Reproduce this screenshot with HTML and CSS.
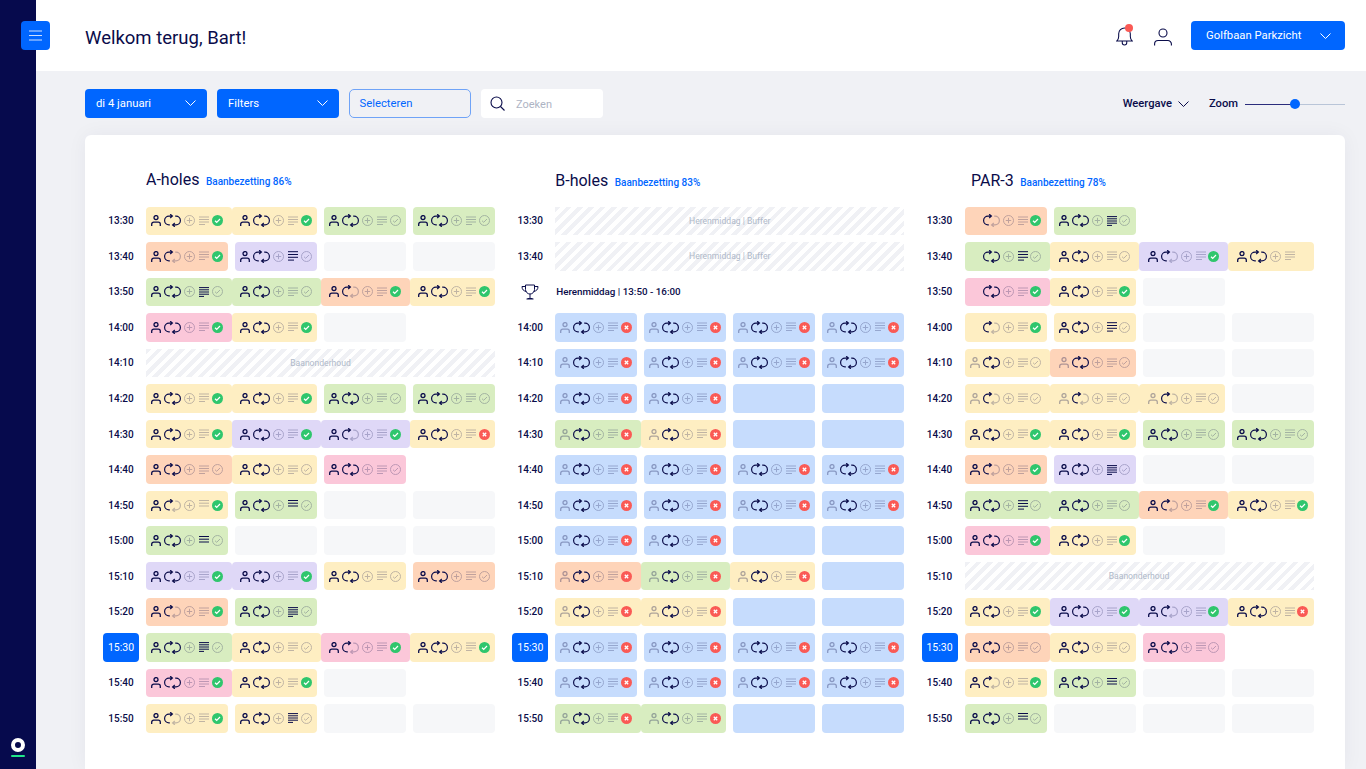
FILE: index.html
```html
<!DOCTYPE html>
<html lang="nl">
<head>
    <meta charset="UTF-8">
    <meta name="viewport" content="width=device-width, initial-scale=1.0">
    <title>Starttijden</title>
    <link rel="stylesheet" href="styles.css">
</head>
<body>
    <!-- Iconen voor de flight-cellen -->
    <svg class="sprite" aria-hidden="true">
        <symbol id="i-person" viewBox="0 0 10 11"><circle cx="5" cy="2.6" r="2" fill="none" stroke="currentColor" stroke-width="1.3"/><path d="M.7 11V9.2a2 2 0 0 1 2-2h4.600a2 2 0 0 1 2 2V11" fill="none" stroke="currentColor" stroke-width="1.3"/></symbol>
        <symbol id="i-rep-l" viewBox="0 0 17 13"><path d="M5.800 10.900H5A4.400 4.400 0 0 1 5 2.100H8.200M6.200.2 8.400 2.100 6.200 4" fill="none" stroke="currentColor" stroke-width="1.2"/></symbol>
        <symbol id="i-rep-r" viewBox="0 0 17 13"><path d="M11.200 2.100H12A4.400 4.400 0 0 1 12 10.900H8.800M10.800 9 8.600 10.900 10.800 12.800" fill="none" stroke="currentColor" stroke-width="1.2"/></symbol>
        <symbol id="i-plus" viewBox="0 0 11 11"><circle cx="5.5" cy="5.5" r="5" fill="none" stroke="currentColor"/><path d="M5.500 2.800v5.400M2.800 5.500h5.400" stroke="currentColor"/></symbol>
        <symbol id="i-check" viewBox="0 0 11 11"><circle cx="5.5" cy="5.5" r="5.5" fill="#2fc66d"/><path d="M3 5.700l1.700 1.600L8 4" fill="none" stroke="#fff" stroke-width="1.2"/></symbol>
        <symbol id="i-cross" viewBox="0 0 11 11"><circle cx="5.5" cy="5.5" r="5.5" fill="#fa5a55"/><path d="M3.800 3.800l3.400 3.400M7.200 3.800l-3.400 3.400" stroke="#fff" stroke-width="1.3"/></symbol>
        <symbol id="i-ok" viewBox="0 0 11 11"><circle cx="5.5" cy="5.5" r="5" fill="none" stroke="currentColor"/><path d="M3 5.700l1.700 1.600L8 4" fill="none" stroke="currentColor"/></symbol>
        <symbol id="i-chev" viewBox="0 0 11 6"><path d="M.5.500l5 5 5-5" fill="none" stroke="currentColor"/></symbol>
    </svg>

    <aside class="sidebar">
        <button class="menu-btn" aria-label="Menu">
            <svg width="13" height="11" viewBox="0 0 13 11"><path d="M0 1h13M0 5.500h13M0 10h13" stroke="#cfe0ff"/></svg>
        </button>
        <div class="logo"></div>
    </aside>

    <main class="content">
        <header class="topbar">
            <h1>Welkom terug, Bart!</h1>
            <div class="topbar-right">
                <div class="bell">
                    <svg width="17" height="20" viewBox="0 0 19 22"><path d="M1 16.500c1.500-1.500 2-2.500 2-5V8.500a6.500 6.500 0 0 1 13 0v3c0 2.500.5 3.500 2 5zM7 17v1.500a2.500 2.500 0 0 0 5 0V17" fill="none" stroke="#0a0c4a" stroke-width="1.2"/></svg>
                    <span class="bell-dot"></span>
                </div>
                <svg class="user" width="18" height="18" viewBox="0 0 18 18"><circle cx="9" cy="5" r="4" fill="none" stroke="#0a0c4a" stroke-width="1.1"/><path d="M.6 17.500v-1.500a3.500 3.500 0 0 1 3.500-3.500h9.800a3.500 3.500 0 0 1 3.500 3.500v1.500" fill="none" stroke="#0a0c4a" stroke-width="1.1"/></svg>
                <button class="btn btn-course">Golfbaan Parkzicht <svg class="chev"><use href="#i-chev"/></svg></button>
            </div>
        </header>

        <div class="toolbar">
            <button class="btn btn-tool">di 4 januari <svg class="chev"><use href="#i-chev"/></svg></button>
            <button class="btn btn-tool">Filters <svg class="chev"><use href="#i-chev"/></svg></button>
            <button class="btn btn-tool btn-outline">Selecteren</button>
            <div class="search">
                <svg width="15" height="15" viewBox="0 0 15 15"><circle cx="6.5" cy="6.5" r="5.5" fill="none" stroke="#0a0c4a" stroke-width="1.1"/><path d="M10.500 10.500 14.500 14.500" stroke="#0a0c4a" stroke-width="1.1"/></svg>
                <span>Zoeken</span>
            </div>
            <div class="view-opts">
                <span class="view-label">Weergave <svg class="chev"><use href="#i-chev"/></svg></span>
                <span class="zoom-label">Zoom</span>
                <div class="slider"><span class="slider-thumb"></span></div>
            </div>
        </div>

        <section class="panel">
            <div class="court court-a">
                <div class="court-head"><h2>A-holes</h2><span>Baanbezetting 86%</span></div>
                <div class="rows" id="court-a"></div>
            </div>
            <div class="court court-b">
                <div class="court-head"><h2>B-holes</h2><span>Baanbezetting 83%</span></div>
                <div class="rows" id="court-b"></div>
            </div>
            <div class="court court-c">
                <div class="court-head"><h2>PAR-3</h2><span>Baanbezetting 78%</span></div>
                <div class="rows" id="court-c"></div>
            </div>
        </section>
    </main>

    <script src="script.js"></script>
</body>
</html>
```

FILE: styles.css
```css
* {
    margin: 0;
    padding: 0;
    box-sizing: border-box;
}

html, body {
    height: 100%;
    overflow: hidden;
}

body {
    display: flex;
    background: #f0f1f5;
    color: #0a0c4a;
    font-family: Roboto, "Liberation Sans", sans-serif;
}

.sprite {
    display: none;
}

button {
    border: 0;
    font-family: inherit;
}

/* Zijbalk */
.sidebar {
    position: relative;
    width: 36px;
    flex-shrink: 0;
    background: #060a4d;
}

.menu-btn {
    position: absolute;
    top: 21px;
    left: 21px;
    width: 29px;
    height: 29px;
    border-radius: 4px;
    background: #0066ff;
    display: flex;
    align-items: center;
    justify-content: center;
    z-index: 2;
}

.logo {
    position: absolute;
    left: 11px;
    bottom: 12px;
    width: 14px;
    display: flex;
    flex-direction: column;
    gap: 3px;
}

.logo::before {
    content: "";
    box-sizing: border-box;
    height: 14px;
    border: 4px solid #fff;
    border-radius: 50%;
}

.logo::after {
    content: "";
    height: 2.5px;
    border-radius: 1px;
    background: #1fe58a;
}

.content {
    flex: 1;
    min-width: 0;
    display: flex;
    flex-direction: column;
}

/* Bovenbalk */
.topbar {
    height: 71px;
    flex-shrink: 0;
    background: #fff;
    display: flex;
    align-items: center;
    justify-content: space-between;
    padding: 0 21px 0 49px;
}

.topbar h1 {
    font-size: 18.5px;
    font-weight: 400;
    margin-top: 5px;
}

.topbar-right {
    display: flex;
    align-items: center;
}

.bell {
    position: relative;
    width: 17px;
    height: 20px;
    margin-right: 21px;
}

.bell-dot {
    position: absolute;
    top: -2px;
    left: 9px;
    width: 8px;
    height: 8px;
    border-radius: 50%;
    background: #fa5a55;
}

.user {
    margin-top: 2px;
    margin-right: 19px;
}

.btn {
    display: flex;
    align-items: center;
    justify-content: space-between;
    height: 29px;
    border-radius: 4px;
    background: #0066ff;
    color: #fff;
    font-size: 11.3px;
    font-weight: 400;
}

.chev {
    width: 11px;
    height: 6px;
}

.btn-course {
    width: 154px;
    padding: 0 14px 0 15px;
}

/* Werkbalk */
.toolbar {
    height: 64px;
    flex-shrink: 0;
    display: flex;
    align-items: flex-start;
    gap: 10.5px;
    padding: 18px 21px 0 49px;
}

.btn-tool {
    width: 121.5px;
    padding: 0 11px 1px;
}

.btn-outline {
    background: transparent;
    border: 1px solid #6fa3f7;
    border-radius: 5px;
    color: #0066ff;
    padding: 0 9.5px 1px;
}

.search {
    width: 121.5px;
    height: 29px;
    border-radius: 4px;
    background: #fff;
    display: flex;
    align-items: center;
    gap: 11px;
    padding-left: 9px;
    font-size: 11px;
    color: #aeb4c4;
}

.search span {
    margin-top: 2px;
}

.view-opts {
    margin-left: auto;
    height: 29px;
    display: flex;
    align-items: center;
    font-size: 11.2px;
    font-weight: 500;
}

.view-label {
    display: flex;
    align-items: center;
    gap: 6px;
    margin-right: 20px;
}

.zoom-label {
    margin-right: 7px;
}

.slider {
    position: relative;
    width: 100px;
    height: 1px;
    margin-top: 1px;
    background: linear-gradient(to right, #2a2c7c 50%, #b9c5d8 50%);
}

.slider-thumb {
    position: absolute;
    top: -5px;
    left: 45px;
    width: 10px;
    height: 10px;
    border-radius: 50%;
    background: #0066ff;
}

/* Paneel met de banen */
.panel {
    flex: 1;
    margin: 0 21px 0 49px;
    padding: 32px 0 0 18px;
    background: #fff;
    border-radius: 6px 6px 0 0;
    box-shadow: 0 0 20px rgba(10, 20, 80, 0.05);
    display: grid;
    grid-template-columns: repeat(3, 392px);
    column-gap: 17.25px;
    align-content: start;
}

.court-head {
    display: flex;
    align-items: baseline;
    gap: 6.5px;
    height: 39.5px;
    padding-top: 2.5px;
    padding-left: 43px;
}

.court-b .court-head,
.court-c .court-head {
    padding-top: 3.5px;
}

.court-c .court-head {
    padding-left: 49.5px;
}

.court-head h2 {
    font-size: 16px;
    font-weight: 400;
}

.court-head span {
    font-size: 10px;
    font-weight: 500;
    color: #0066ff;
}

.rows {
    display: grid;
    grid-template-columns: 36px repeat(4, 82px);
    grid-auto-rows: 28.5px;
    column-gap: 7px;
    row-gap: 7.05px;
}

.time {
    display: flex;
    align-items: center;
    justify-content: center;
    font-size: 10px;
    font-weight: 500;
    border-radius: 4px;
}

.time.now {
    background: #0066ff;
    color: #fff;
    font-weight: 400;
    font-size: 10.5px;
}

.block {
    grid-column: 2 / -1;
    display: flex;
    align-items: center;
    justify-content: center;
    font-size: 8.6px;
    color: #afb9c9;
    background: repeating-linear-gradient(135deg, #f0f1f5 0 4px, #fff 4px 8px);
}

.notice {
    grid-column: 2 / -1;
    display: flex;
    align-items: center;
    padding-left: 1px;
    font-size: 9.8px;
    font-weight: 500;
}

/* Flight-cel */
.cell {
    display: grid;
    grid-template-columns: 10px 17px 11px 10px 11px;
    column-gap: 3px;
    align-items: center;
    padding-left: 5px;
    border-radius: 4px;
}

.cell svg {
    display: block;
}

.i-person { width: 10px; height: 11px; }
.i-rep { position: relative; width: 17px; height: 13px; }
.i-rep svg { position: absolute; inset: 0; width: 17px; height: 13px; }
.i-round { width: 11px; height: 11px; }
.i-lines { width: 10px; height: 10px; margin-left: 1px; }
.i-lines + .i-round { margin-left: 0.5px; }

.off { opacity: 0.25; }
.off-person { opacity: 0.32; }

.join-r { margin-right: -3.5px; }
.join-l { margin-left: -3.5px; padding-left: 8.5px; }

.c-y { background: #feeec2; }
.c-g { background: #d8edc0; }
.c-o { background: #fed4b9; }
.c-p { background: #dfd8f7; }
.c-r { background: #fbc7d9; }
.c-b { background: #c6dcfd; }
.c-e { background: #f6f7f9; }
```

FILE: script.js
```js
// Rij: tijd + cellen. Cel = kleur, persoon (1/0/-), rondes (2/1), notitie, status, "+" = vast aan volgende
// "." lege cel, "B" lege blauwe cel, "_" niets
const T = ['13:30','13:40','13:50','14:00','14:10','14:20','14:30','14:40','14:50','15:00','15:10','15:20','15:30','15:40','15:50'];

const BL = 'b02fx b02fx b02fx b02fx';
const BH = 'b02fx b02fx B B';

const COURTS = {
    'court-a': [
        'y12fk+ y12fk g12fo g12fo',
        'o11fk p12ao . .',
        'g12bo+ g12fo+ o11fk+ y12fk',
        'r12fk+ y12fk . _',
        '#Baanonderhoud',
        'y12fk+ y12fk g12fo g12fo',
        'y12fk+ p12fk+ p11fk+ y12fx',
        'o12fo+ y12fo r12fo _',
        'y11ek g12co . .',
        'g12do . . .',
        'p12fk+ p12fk y12fo o12fo',
        'o11fk g12bo _ _',
        'g12bo+ y12fo+ r11fk+ y12fk',
        'r12fk+ y12fk . _',
        'y11fk y12bo . .'
    ],
    'court-b': [
        '#Herenmiddag | Buffer',
        '#Herenmiddag | Buffer',
        '!Herenmiddag | 13:50 - 16:00',
        BL,
        BL,
        BH,
        'g02fx+ y02fx B B',
        BL,
        BL,
        BH,
        'o02fx+ g02fx+ y02fx B',
        'y02fx+ y02fx B B',
        BL,
        BL,
        'g02fx+ g02fx B B'
    ],
    'court-c': [
        'o-1fk g12bo _ _',
        'g-2ao+ y12fo+ p11fk+ y12f-',
        'r-2fk+ y12fk . _',
        'y-1fk y12ao . .',
        'y02fo+ o02fo . .',
        'y01fo+ y01fo+ y01fo .',
        'y12fk+ y12fk g12fo g12fo',
        'o11fk p12bo . .',
        'g12ao+ g12fo+ o11fk+ y12fk',
        'r12fk+ y12fk . _',
        '#Baanonderhoud',
        'y12fk+ p12fk+ p11fk+ y12fx',
        'o12fo+ y12fo r12fo _',
        'y11ek g12co . .',
        'g12do . . .'
    ]
};

// Notitie-icoon: y-positie en lengte van de lijnen
const NOTES = {
    f: { off: true, lines: [[1, 10], [3.5, 10], [6, 10], [8.5, 6]] },
    e: { off: true, lines: [[.5, 10], [3.2, 10], [6, 10]] },
    a: { lines: [[.7, 10], [3.5, 10], [6.3, 10], [9.1, 6]] },
    b: { lines: [[.6, 10], [2.8, 10], [5, 10], [7.2, 10], [9.4, 5]] },
    c: { lines: [[.5, 10], [3.2, 10], [6, 10]] },
    d: { lines: [[.5, 10], [3.2, 10], [6, 10]] }
};

const TROPHY = '<svg width="18" height="16" viewBox="0 0 18 16" fill="none" stroke="#0a0c4a"><path d="M4.500 1h9v4.500a4.500 4.500 0 0 1-9 0zM4.500 2.500H1c0 3 1.500 4.500 4.500 5M13.500 2.500H17c0 3-1.500 4.500-4.500 5M9 10v4M5.500 15h7M6.500 14.500h5"/></svg>';

function use(id, cls) {
    return `<svg class="${cls}"><use href="#${id}"/></svg>`;
}

function noteIcon(kind) {
    const note = NOTES[kind];
    const d = note.lines.map(([y, w]) => `M0 ${y}h${w}`).join('');
    return `<svg class="i-lines ${note.off ? 'off' : ''}" viewBox="0 0 10 10"><path d="${d}" stroke="currentColor"/></svg>`;
}

function cellHtml(code, joinLeft) {
    if (code === '_') return '<div></div>';
    if (code === '.') return '<div class="cell c-e"></div>';
    if (code === 'B') return '<div class="cell c-b"></div>';

    const [color, person, rounds, note, status] = code;
    const classes = ['cell', 'c-' + color];
    if (code.endsWith('+')) classes.push('join-r');
    if (joinLeft) classes.push('join-l');

    let personIcon = '<span></span>';
    if (person === '1') personIcon = use('i-person', 'i-person');
    if (person === '0') personIcon = use('i-person', 'i-person off-person');

    const repIcon = `<span class="i-rep">${use('i-rep-l', '')}${use('i-rep-r', rounds === '1' ? 'off' : '')}</span>`;

    let statusIcon = '<span></span>';
    if (status === 'k') statusIcon = use('i-check', 'i-round');
    if (status === 'x') statusIcon = use('i-cross', 'i-round');
    if (status === 'o') statusIcon = use('i-ok', 'i-round off');

    return `<div class="${classes.join(' ')}">${personIcon}${repIcon}${use('i-plus', 'i-round off')}${noteIcon(note)}${statusIcon}</div>`;
}

function rowHtml(row, i) {
    const time = T[i];
    if (row[0] === '!') {
        return `<div class="time">${TROPHY}</div><div class="notice">${row.slice(1)}</div>`;
    }
    const label = `<div class="time ${time === '15:30' ? 'now' : ''}">${time}</div>`;
    if (row[0] === '#') {
        return `${label}<div class="block">${row.slice(1)}</div>`;
    }
    const codes = row.split(' ');
    return label + codes.map((code, n) => cellHtml(code, n > 0 && codes[n - 1].endsWith('+'))).join('');
}

Object.keys(COURTS).forEach(id => {
    document.getElementById(id).innerHTML = COURTS[id].map(rowHtml).join('');
});
```
